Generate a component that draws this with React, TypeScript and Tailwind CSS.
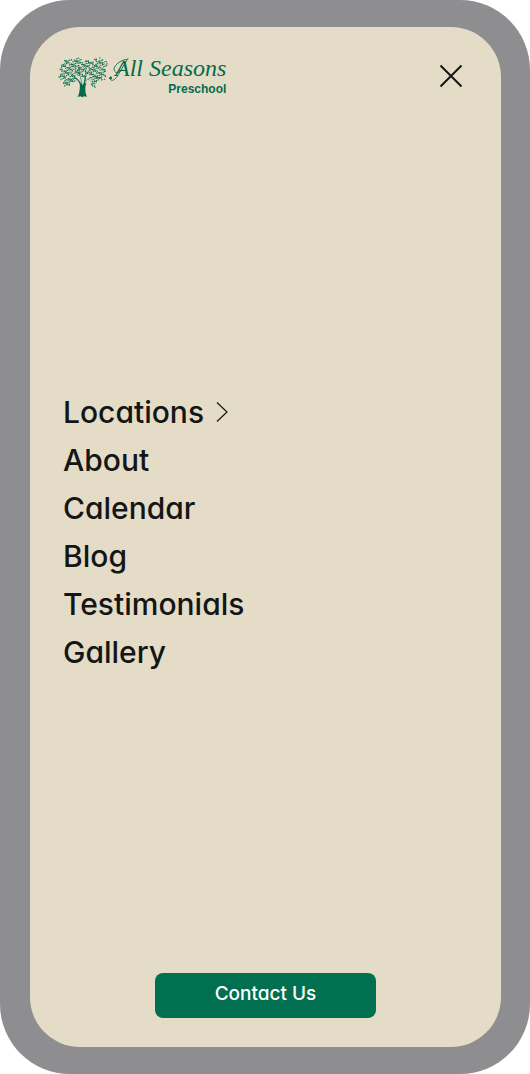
const links = ["Locations", "About", "Calendar", "Blog", "Testimonials", "Gallery"];

// Each clump is [centre x, centre y, radius] of foliage in a 150 x 126 drawing.
const clumps = [
  [20, 38, 15], [16, 62, 13], [32, 20, 13], [40, 46, 19], [54, 24, 17],
  [72, 44, 19], [82, 24, 13], [102, 34, 19], [122, 16, 13], [136, 22, 11],
  [112, 58, 17], [132, 62, 11], [26, 80, 11], [108, 84, 10], [60, 14, 9],
  [42, 72, 12], [132, 40, 12],
];

const leaves = Array.from({ length: 21 * 29 }, (_, i) => {
  const column = i % 29;
  const row = Math.floor(i / 29);
  return {
    x: 3 + column * 5.2 + Math.sin(i * 12.9) * 2.2,
    y: 3 + row * 5 + Math.sin(i * 7.3 + 1) * 2.2,
    turn: (i * 67 + row * 41) % 180,
  };
}).filter(
  (leaf, i) => i % 7 !== 3 && clumps.some(([cx, cy, r]) => Math.hypot(leaf.x - cx, leaf.y - cy) < r),
);

function TreeMark() {
  return (
    <svg viewBox="0 0 150 126" className="h-[42px] w-[50px] shrink-0" aria-hidden="true">
      <g fill="#056b4c">
        {leaves.map((leaf, i) => (
          <ellipse
            key={i}
            cx={leaf.x}
            cy={leaf.y}
            rx="3"
            ry="1.5"
            transform={`rotate(${leaf.turn} ${leaf.x} ${leaf.y})`}
          />
        ))}
        <path d="M64 76c3 13 2 34-5 47l9-2 5 3 5-3 9 1c-6-12-7-29-1-43l-10 7-5-1z" />
      </g>
      <g fill="none" stroke="#056b4c" strokeLinecap="round">
        <path strokeWidth="4" d="M70 90C66 78 62 72 52 66M77 90C80 76 82 72 82 62" />
        <path strokeWidth="1.8" d="M72 84C68 65 64 50 60 34M82 66C86 52 94 42 104 32M80 76C92 66 104 66 114 56" />
        <path strokeWidth="1" d="M54 68L28 50M48 66L24 76M82 62L84 34M104 64L128 64M64 46L40 26M90 69L108 84" />
      </g>
    </svg>
  );
}

function Logo() {
  return (
    <a href="#home" aria-label="All Seasons Preschool" className="flex items-start pt-px text-[#056b4c]">
      <TreeMark />
      <span className="relative flex flex-col items-end pl-[7px]">
        <svg
          viewBox="0 0 24 30"
          className="absolute top-0 left-0 h-[30px] w-6"
          fill="none"
          stroke="currentColor"
          strokeLinecap="round"
          aria-hidden="true"
        >
          <path strokeWidth="0.9" d="M20 3C13 4 7 8 6 13C6 17 10 18 14 14M19 4L10 19C8 23 5 25 3 24C1 23 1 21 3 21" />
          <circle cx="2.7" cy="22" r="1.3" fill="currentColor" stroke="none" />
        </svg>
        <span className="font-['Liberation_Serif',serif] text-2xl leading-6 italic">All Seasons</span>
        <span className="pt-0.5 font-['Liberation_Sans',sans-serif] text-xs leading-[14px] font-bold">Preschool</span>
      </span>
    </a>
  );
}

export default function App() {
  return (
    <div className="flex min-h-screen rounded-[70px] bg-[#8e8e90] py-[27px] pr-[29px] pl-[30px] font-['Inter',sans-serif] [font-feature-settings:'cv11']">
      <div className="flex flex-1 flex-col rounded-[50px] bg-[#e4dcc7] pt-7 pb-[29px] text-[#141616]">
        <header className="flex items-start justify-between pr-9 pl-7">
          <Logo />
          <button type="button" aria-label="Close menu" className="mt-[7px] flex size-7 items-center justify-center">
            <svg viewBox="0 0 24 24" className="size-6" fill="none" stroke="currentColor" strokeWidth="2" aria-hidden="true">
              <path d="M1.5 1.5l21 21M22.5 1.5l-21 21" />
            </svg>
          </button>
        </header>
        <nav aria-label="Main" className="flex flex-1 flex-col justify-center px-[33px] pb-2">
          <ul>
            {links.map((label) => (
              <li key={label}>
                <a href={`#${label.toLowerCase()}`} className="inline-flex items-center gap-3 align-top text-[30px] leading-[48px] font-medium">
                  {label}
                  {label === "Locations" && (
                    <svg viewBox="0 0 12 20" className="h-5 w-3" fill="none" stroke="currentColor" strokeWidth="1.2" aria-hidden="true">
                      <path d="M1 .5l10 9.5L1 19.5" />
                    </svg>
                  )}
                </a>
              </li>
            ))}
          </ul>
        </nav>
        <a
          href="#contact"
          className="flex h-[45px] w-[221px] items-center justify-center self-center rounded-lg bg-[#007050] pb-0.5 text-[19px] font-medium text-white"
        >
          Contact Us
        </a>
      </div>
    </div>
  );
}
